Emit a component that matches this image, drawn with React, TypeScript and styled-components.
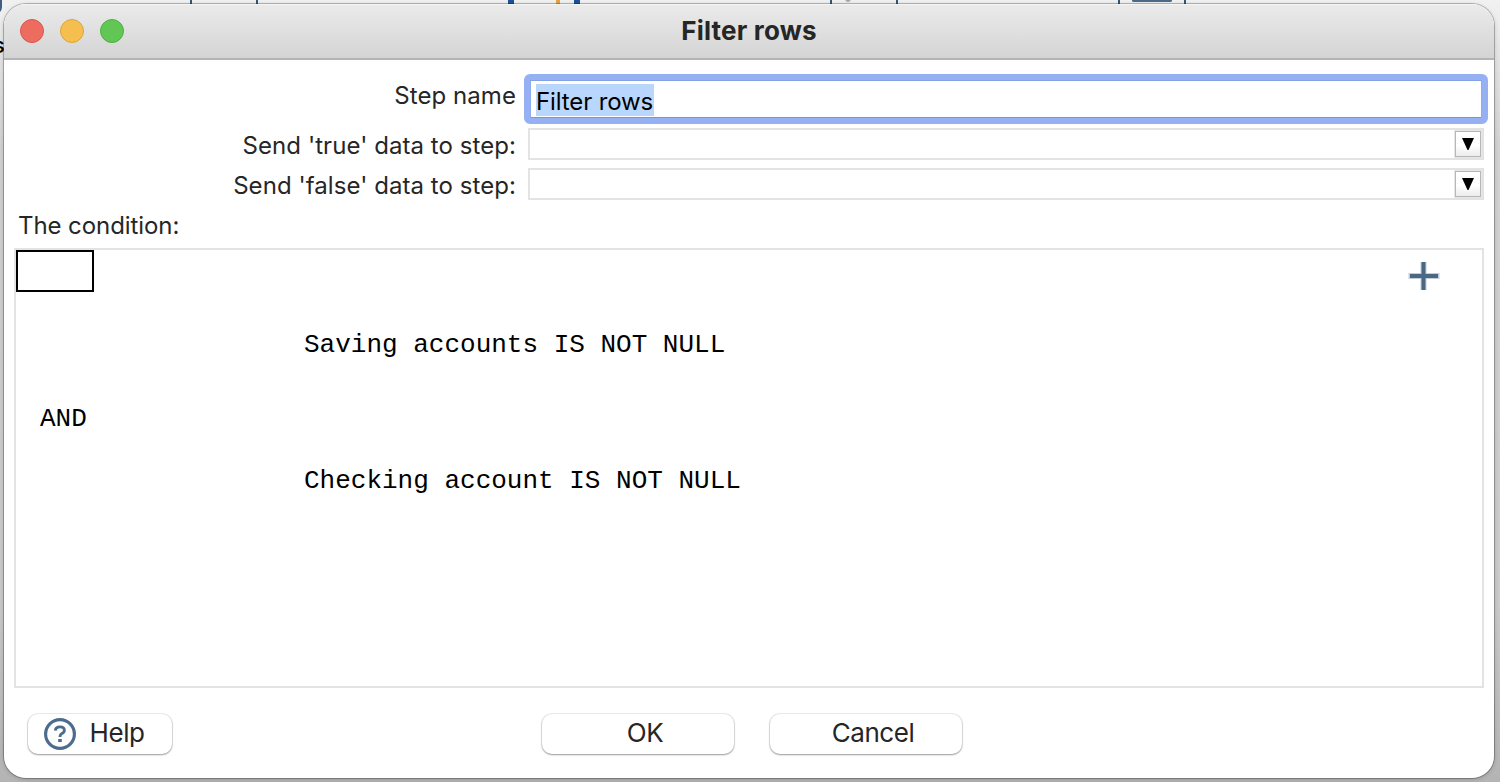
import React from "react";
import styled, { createGlobalStyle } from "styled-components";

const Global = createGlobalStyle`
  * { box-sizing: border-box; }
  html, body { margin: 0; padding: 0; overflow: hidden; }
  body { font-family: Inter, "Liberation Sans", sans-serif; color: #262626; }
`;

const Desktop = styled.div`
  position: relative;
  width: 1500px;
  height: 782px;
  padding: 4px 6px 4px 4px;
  overflow: hidden;
  background: linear-gradient(180deg, #f1f1f1 0, #e6e6e6 50px, #d2d2d2 150px, #cbcbcb 600px, #b4b4b4 782px);
`;

const Backdrop = styled.svg`
  position: absolute;
  left: 0;
  top: 0;
`;

const BackdropLabel = styled.span`
  position: absolute;
  left: -7px;
  top: 31px;
  font-size: 22px;
  line-height: 28px;
  font-weight: 500;
  color: #000;
`;

const Window = styled.main`
  position: relative;
  display: flex;
  flex-direction: column;
  height: 774px;
  border-radius: 22px;
  background: #fff;
  overflow: hidden;
`;

const Frame = styled.div`
  position: relative;
  border-radius: 22px;
  box-shadow: 0 0 0 1px rgba(0, 0, 0, 0.24), 0 1px 5px rgba(0, 0, 0, 0.2);
`;

const TitleBar = styled.header`
  display: grid;
  grid-template-columns: 1fr auto 1fr;
  align-items: center;
  height: 56px;
  flex: none;
  padding: 0 16px 0 16px;
  border-bottom: 2px solid #b4b4b4;
  background: linear-gradient(#ebebeb, #d4d4d4);
  box-shadow: inset 0 1px 0 #f5f5f5;
`;

const Lights = styled.div`
  display: flex;
  gap: 16px;
`;

const Light = styled.span<{ $fill: string; $edge: string }>`
  width: 24px;
  height: 24px;
  border-radius: 50%;
  background: ${(p) => p.$fill};
  border: 1px solid ${(p) => p.$edge};
`;

const Title = styled.h1`
  margin: 0 0 1px 0;
  font-size: 26px;
  line-height: 30px;
  font-weight: 700;
  letter-spacing: 0.18px;
`;

const Form = styled.section`
  display: flex;
  flex-direction: column;
  padding: 14px 6px 0 0;
`;

const Row = styled.div<{ $height: number; $gap: number }>`
  display: grid;
  grid-template-columns: 512px 1fr;
  column-gap: 8px;
  height: ${(p) => p.$height}px;
  margin-bottom: ${(p) => p.$gap}px;
`;

const Label = styled.label<{ $top: number }>`
  padding-top: ${(p) => p.$top}px;
  text-align: right;
  font-size: 24px;
  line-height: 30px;
  letter-spacing: 0.06px;
  white-space: nowrap;
`;

const FocusRing = styled.div`
  display: flex;
  align-items: flex-start;
  height: 50px;
  border: 6px solid #95b1f4;
  border-radius: 6px;
  padding: 4px 6px;
  background: #fff;
  box-shadow: inset 0 1px 0 #86a2e6, inset 1px 0 0 #8fabef, inset -1px 0 0 #8fabef, inset 0 -1px 0 #7895d6;
`;

const Selected = styled.span`
  height: 32px;
  width: 118px;
  padding: 3px 0 0 0;
  background: #b9d6fd;
  color: #000;
  font-size: 24px;
  line-height: 30px;
  white-space: nowrap;
  letter-spacing: -0.12px;
`;

const Combo = styled.div`
  display: flex;
  justify-content: flex-end;
  height: 32px;
  margin: 0 4px;
  border: 2px solid #e3e3e3;
`;

const ComboButton = styled.span`
  display: flex;
  align-items: center;
  justify-content: center;
  width: 28px;
  height: 28px;
  border: 2px solid #b7b7b7;
  outline: 1px solid #e6e6e6;
  outline-offset: -1px;
  background: linear-gradient(#fff 55%, #ececec);
`;

const Caption = styled.div`
  height: 48px;
  padding: 11px 0 0 14px;
  font-size: 24px;
  line-height: 30px;
  letter-spacing: -0.08px;
`;

const Panel = styled.section`
  display: flex;
  flex-direction: column;
  flex: none;
  height: 440px;
  margin: 0 10px;
  border: 2px solid #e3e3e3;
`;

const PanelTop = styled.div`
  display: flex;
  justify-content: space-between;
  height: 79px;
  padding-right: 42px;
`;

const NotBox = styled.div`
  width: 78px;
  height: 42px;
  border: 2px solid #000;
`;

const PlusIcon = styled.svg`
  margin-top: 10px;
`;

const Clause = styled.div<{ $indent: number; $after: number }>`
  height: 32px;
  padding-left: ${(p) => p.$indent}px;
  margin-bottom: ${(p) => p.$after}px;
  font-family: "Liberation Mono", monospace;
  font-size: 26px;
  line-height: 32px;
  white-space: pre;
  color: #000;
`;

const Footer = styled.footer`
  display: flex;
  padding: 26px 0 0 24px;
`;

const Button = styled.button<{ $width: number; $before?: number; $inset?: number; $end?: number }>`
  display: flex;
  align-items: center;
  justify-content: center;
  gap: 14px;
  width: ${(p) => p.$width}px;
  height: 40px;
  margin-left: ${(p) => p.$before ?? 0}px;
  padding: 0 ${(p) => p.$end ?? 0}px 2px ${(p) => p.$inset ?? 0}px;
  border: 0;
  border-radius: 10px;
  background: #fff;
  color: #262626;
  font-family: inherit;
  font-size: 26px;
  line-height: 32px;
  letter-spacing: -0.45px;
  box-shadow: 0 0 0 1px rgba(0, 0, 0, 0.07), 0 1px 2px rgba(0, 0, 0, 0.35);
`;

const HelpIcon = styled.svg`
  position: relative;
  top: 1px;
`;

const Arrow = () => (
  <svg width="12" height="12" viewBox="0 0 12 12">
    <path d="M0 0H12L6.5 12H5.5Z" fill="#000" />
  </svg>
);

export default function App() {
  return (
    <>
      <Global />
      <Desktop>
        <Backdrop width="1500" height="20" viewBox="0 0 1500 20">
          <path d="M0 0H2V7Q2 10 0 12Z" fill="#3d5f85" />
          <path d="M190 0h2v4h-2zM256 0h2v4h-2zM830 0h2v4h-2zM896 0h2v4h-2zM1118 0h2v4h-2zM1184 0h2v4h-2z" fill="#365778" />
          <path d="M508 0h6v4h-6zM574 0h6v4h-6z" fill="#1f5298" />
          <path d="M556 0h4v4h-4z" fill="#e3a543" />
          <path d="M845 0h6l-2 2h-2z" fill="#9eacbb" />
          <path d="M1132 0h40v1l-1 1h-38l-1-1z" fill="#4c6b88" />
        </Backdrop>
        <BackdropLabel>s</BackdropLabel>
        <Frame>
          <Window>
            <TitleBar>
              <Lights>
                <Light $fill="#ee6b5f" $edge="#d7574c" />
                <Light $fill="#f5bf4f" $edge="#dba53c" />
                <Light $fill="#62c655" $edge="#50ae43" />
              </Lights>
              <Title>Filter rows</Title>
            </TitleBar>
            <Form>
              <Row $height={50} $gap={4}>
                <Label $top={7}>Step name</Label>
                <FocusRing>
                  <Selected>Filter rows</Selected>
                </FocusRing>
              </Row>
              <Row $height={32} $gap={8}>
                <Label $top={3}>Send 'true' data to step:</Label>
                <Combo>
                  <ComboButton><Arrow /></ComboButton>
                </Combo>
              </Row>
              <Row $height={32} $gap={0}>
                <Label $top={3}>Send 'false' data to step:</Label>
                <Combo>
                  <ComboButton><Arrow /></ComboButton>
                </Combo>
              </Row>
            </Form>
            <Caption>The condition:</Caption>
            <Panel>
              <PanelTop>
                <NotBox />
                <PlusIcon width="32" height="32" viewBox="0 0 32 32">
                  <path d="M15.5 2V30M0.5 16H31.5" stroke="#c3ced9" strokeWidth="6" />
                  <path d="M15.5 2V30M2 16H30" stroke="#4a6783" strokeWidth="4" />
                </PlusIcon>
              </PanelTop>
              <Clause $indent={288} $after={42}>Saving accounts IS NOT NULL</Clause>
              <Clause $indent={24} $after={30}>AND</Clause>
              <Clause $indent={288} $after={0}>Checking account IS NOT NULL</Clause>
            </Panel>
            <Footer>
              <Button $width={144} $end={12}>
                <HelpIcon width="32" height="32" viewBox="0 0 32 32" fill="none" stroke="#4e6d8c">
                  <circle cx="16" cy="16" r="14.4" strokeWidth="3.2" />
                  <path d="M11.3 12.6Q11.6 8.8 16 8.8Q20.4 8.8 20.4 12.3Q20.4 14.4 18 15.5Q16 16.5 16 19" strokeWidth="2.8" />
                  <path d="M16 21V24" strokeWidth="3.6" />
                </HelpIcon>
                Help
              </Button>
              <Button $width={192} $before={370} $inset={14}>OK</Button>
              <Button $width={192} $before={36} $inset={14}>Cancel</Button>
            </Footer>
          </Window>
        </Frame>
      </Desktop>
    </>
  );
}
